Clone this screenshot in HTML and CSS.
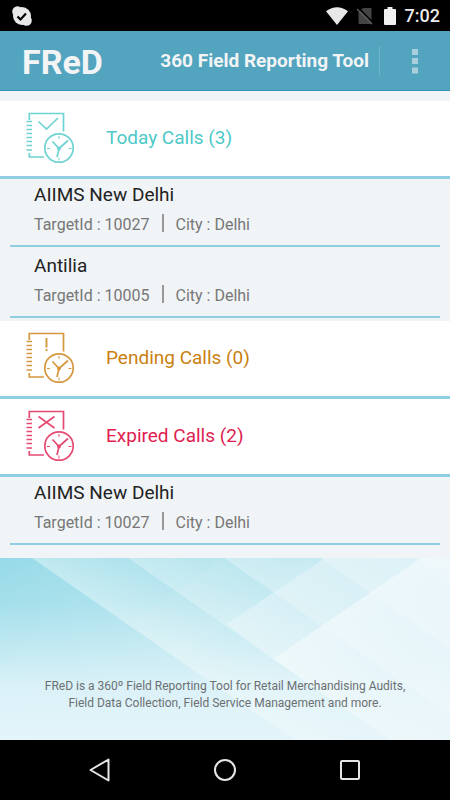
FILE: index.html
```html
<!DOCTYPE html>
<html lang="en">
<head>
<meta charset="utf-8">
<meta name="viewport" content="width=device-width, initial-scale=1">
<title>FReD</title>
<link rel="stylesheet" href="styles.css">
</head>
<body>
<svg class="defs" aria-hidden="true">
  <symbol id="book-clock" viewBox="0 0 50 52">
    <path d="M3.300 8V1.500H37.500V19.500M3.300 41V45H18" stroke-width="1.700"/>
    <path d="M.5 9.500h5.500M.5 13.500h5.500M.5 17.500h5.500M.5 21.500h5.500M.5 25.500h5.500M.5 29.500h5.500M.5 33.500h5.500M.5 38h5.500" stroke-width="1.400"/>
    <circle cx="33" cy="36" r="14.200" stroke-width="1.700"/>
    <path d="M26.500 29.500l6.500 7L42 28.500M33 36.500L31 45" stroke-width="1.700"/>
    <path d="M33 24v3M33 45.500v3M21 36.500h3M42.500 36.500h3" stroke-width="1"/>
    <circle cx="33" cy="36.500" r="1.500" fill="currentColor"/>
  </symbol>
</svg>
<div class="screen">
  <div class="status">
    <svg class="status-app" viewBox="0 0 20 20" width="20" height="20" aria-hidden="true">
      <circle cx="5.500" cy="5.500" r="5.300" fill="#e8e8e8"/><circle cx="14.500" cy="14.500" r="5.300" fill="#e8e8e8"/><circle cx="10" cy="10" r="9" fill="#e8e8e8"/>
      <path d="M5.500 10.500l3 3L14 7.500" fill="none" stroke="#000" stroke-width="2.200"/>
    </svg>
    <svg viewBox="0 0 22 18" width="22" height="18" aria-hidden="true"><path d="M0 4.300Q11-3.600 22 4.300L11 18z" fill="#e8e8e8"/></svg>
    <svg class="status-sim" viewBox="0 0 16 18" width="16" height="18" aria-hidden="true"><path d="M6 1h7.500q1 0 1 1v14q0 1-1 1H2.500q-1 0-1-1V5.500z" fill="#444"/><path d="M1 .5l15.500 15.500" stroke="#000" stroke-width="1.500"/><path d="M0 2l15 15.200" stroke="#5c5c5c" stroke-width="1.500"/></svg>
    <svg class="status-battery" viewBox="0 0 12 18" width="12" height="18" aria-hidden="true"><path d="M3.500 0h5v2H11q1 0 1 1v14q0 1-1 1H1q-1 0-1-1V3q0-1 1-1h2.500z" fill="#f0f0f0"/></svg>
    <time class="clock">7:02</time>
  </div>

  <header class="bar">
    <h1 class="brand">FReD</h1>
    <p class="tagline">360 Field Reporting Tool</p>
    <button class="more" type="button" aria-label="More options"><svg viewBox="0 0 6 26" width="6" height="26"><path d="M0 1h6v6H0zM0 10h6v6H0zM0 19.500h6v6H0z" fill="#a9cfdc"/></svg></button>
  </header>

  <main class="calls">
    <section>
      <button class="group today" type="button">
        <svg class="icon" width="50" height="52" aria-hidden="true"><use href="#book-clock"/><path d="M12.500 9.500l8 7.500L32 6" stroke-width="1.700"/></svg>
        <span>Today Calls (3)</span>
      </button>
      <ul class="list">
        <li class="call"><h2>AIIMS New Delhi</h2><p><span>TargetId : 10027</span><i class="rule"></i><span>City : Delhi</span></p></li>
        <li class="call"><h2>Antilia</h2><p><span>TargetId : 10005</span><i class="rule"></i><span>City : Delhi</span></p></li>
      </ul>
    </section>
    <section>
      <button class="group pending" type="button">
        <svg class="icon" width="50" height="52" aria-hidden="true"><use href="#book-clock"/><path d="M20.500 6v9.500M20.500 17v2" stroke-width="1.900"/></svg>
        <span>Pending Calls (0)</span>
      </button>
    </section>
    <section>
      <button class="group expired" type="button">
        <svg class="icon" width="50" height="52" aria-hidden="true"><use href="#book-clock"/><path d="M12.500 6.500l16 11.500M28.500 6.500L12.500 18" stroke-width="1.700"/></svg>
        <span>Expired Calls (2)</span>
      </button>
      <ul class="list">
        <li class="call"><h2>AIIMS New Delhi</h2><p><span>TargetId : 10027</span><i class="rule"></i><span>City : Delhi</span></p></li>
      </ul>
    </section>
  </main>

  <footer class="about">
    <svg class="backdrop" viewBox="0 0 450 182" preserveAspectRatio="none" aria-hidden="true">
      <defs>
        <linearGradient id="base" x1="0" y1="0" x2="0" y2="1"><stop offset="0" stop-color="#97dae8"/><stop offset=".25" stop-color="#a4dfeb"/><stop offset=".7" stop-color="#d9f1f7"/><stop offset="1" stop-color="#e4f5fb"/></linearGradient>
        <linearGradient id="side"><stop offset="0" stop-color="#e2f3f9" stop-opacity="0"/><stop offset=".6" stop-color="#e2f3f9" stop-opacity=".35"/><stop offset="1" stop-color="#e2f3f9" stop-opacity=".9"/></linearGradient>
        <linearGradient id="band" gradientUnits="userSpaceOnUse" x1="0" y1="0" x2="31" y2="-45"><stop offset="0" stop-color="#f4fbfa" stop-opacity=".42"/><stop offset="1" stop-color="#f4fbfa" stop-opacity=".14"/></linearGradient>
        <linearGradient id="ray" gradientUnits="userSpaceOnUse" x1="421" y1="0" x2="470" y2="72"><stop offset="0" stop-color="#f2f9fd" stop-opacity=".75"/><stop offset="1" stop-color="#f2f9fd" stop-opacity=".3"/></linearGradient>
        <linearGradient id="ray-soft" gradientUnits="userSpaceOnUse" x1="325" y1="0" x2="366" y2="60"><stop offset="0" stop-color="#eaf5fa" stop-opacity=".5"/><stop offset="1" stop-color="#eaf5fa" stop-opacity=".2"/></linearGradient>
      </defs>
      <rect width="450" height="182" fill="url(#base)"/>
      <rect width="450" height="182" fill="url(#side)"/>
      <path d="M223 0h102L177 101 128 66 178 32z" fill="#e5f5fa" fill-opacity=".1"/>
      <path d="M325 0H421L273 101 227 66z" fill="url(#ray-soft)"/>
      <path d="M421 0h29V182H390L273 101z" fill="url(#ray)"/>
      <g fill="url(#band)">
        <path transform="translate(32)" d="M0 0H96L358 182H262z"/>
        <path transform="translate(128)" d="M0 0H96L358 182H262z"/>
        <path transform="translate(224)" d="M0 0H96L358 182H262z"/>
        <path transform="translate(320)" d="M0 0H96L358 182H262z"/>
        <path transform="translate(416)" d="M0 0H96L358 182H262z"/>
      </g>
    </svg>
    <p>FReD is a 360º Field Reporting Tool for Retail Merchandising Audits, Field Data Collection, Field Service Management and more.</p>
  </footer>

  <nav class="keys">
    <button type="button" aria-label="Back"><svg viewBox="0 0 24 24" width="24" height="24"><path d="M20.500 1.500v21L2.500 12z"/></svg></button>
    <button type="button" aria-label="Home"><svg viewBox="0 0 24 24" width="24" height="24"><circle cx="12" cy="12" r="10"/></svg></button>
    <button type="button" aria-label="Recent apps"><svg viewBox="0 0 24 24" width="24" height="24"><rect x="3" y="3" width="18" height="18" rx="1"/></svg></button>
  </nav>
</div>
</body>
</html>
```
FILE: styles.css
```css
* { box-sizing: border-box; margin: 0; padding: 0; }
body { font-family: Roboto, sans-serif; background: #f0f4f6; color: #222; }
button { border: 0; background: none; font: inherit; color: inherit; cursor: pointer; }
svg { display: block; flex: none; }
.defs { position: absolute; width: 0; height: 0; }
.screen { display: flex; flex-direction: column; min-height: 100vh; }

.status { display: flex; align-items: center; height: 31px; padding: 0 10px 0 12px; background: #000; color: #ececec; }
.status-app { margin-right: auto; }
.status-sim { margin-left: 9px; }
.status-battery { margin-left: 11px; }
.clock { margin-left: 9px; font-size: 18px; font-weight: 500; line-height: 31px; }

.bar { display: flex; align-items: center; height: 60px; padding-left: 22px; background: #53a4be; border-bottom: 1px solid #3395b3; color: #f2f4f5; }
.brand { font-size: 34px; font-weight: 700; line-height: 40px; padding-top: 3px; }
.tagline { margin-left: auto; font-size: 19px; font-weight: 700; padding-right: 10px; line-height: 30px; border-right: 1px solid #6fb5ca; }
.more { display: flex; justify-content: center; align-items: center; width: 70px; height: 48px; }

.calls { padding: 10px 0; }
.group { display: flex; align-items: center; gap: 30px; width: 100%; height: 78px; padding: 0 0 2px 26px; background: #fff; border-bottom: 3px solid #90cfe3; font-size: 19px; text-align: left; }
.icon { fill: none; stroke: currentColor; opacity: .8; }
.today { color: #4cc9c8; }
.pending { color: #cb7f10; }
.expired { color: #e01e50; }
.list { list-style: none; }
.call { height: 68px; margin: 0 10px 3px; padding: 4px 24px 0; border-bottom: 2px solid #90cfe3; }
.call h2 { font-size: 19px; font-weight: 400; line-height: 24px; }
.call p { display: flex; align-items: center; font-size: 16px; line-height: 36px; color: #777; }
.rule { width: 2px; height: 18px; margin: 0 12px 4px; background: #999; }

.about { position: relative; flex: 1; display: flex; align-items: flex-end; justify-content: center; padding: 0 36px 28px; font-size: 12px; line-height: 17px; color: #6b7073; text-align: center; }
.about p { position: relative; }
.backdrop { position: absolute; inset: 0; width: 100%; height: 100%; }

.keys { display: flex; justify-content: center; gap: 77px; height: 60px; background: #000; }
.keys button { display: flex; align-items: center; justify-content: center; width: 48px; }
.keys svg { fill: none; stroke: #e6e6e6; stroke-width: 2; stroke-linejoin: round; }
```
